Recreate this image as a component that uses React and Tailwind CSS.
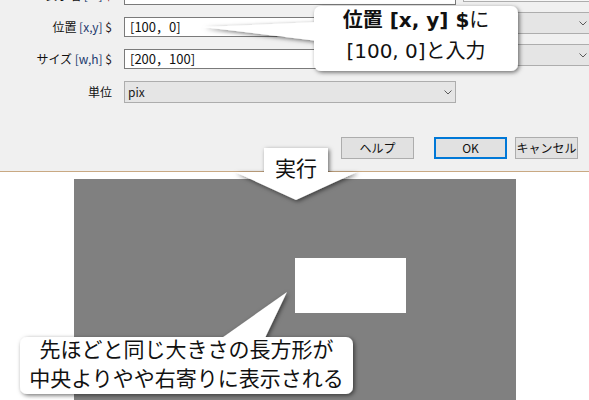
import React from "react";

function Chevron() {
  return (
    <div className="w-[15px] flex items-center justify-center shrink-0">
      <svg width="8" height="5" viewBox="0 0 8 5">
        <polyline points="0.5,0.5 4,4 7.5,0.5" fill="none" stroke="#5a5a5a" strokeWidth="1" />
      </svg>
    </div>
  );
}

function Combo({ text = "", w = "w-[128px]" }) {
  return (
    <div className={`${w} h-[22px] shrink-0 bg-[#e5e5e5] border border-[#adadad] flex items-center`}>
      <div className="flex-1 pl-[3px] text-[12px] leading-[20px] text-[#1a1a1a]">{text}</div>
      <Chevron />
    </div>
  );
}

function Input({ text }) {
  return (
    <div className="w-[332px] h-[20px] mt-[5px] shrink-0 bg-white border border-[#7a7a7a] pl-[5px] text-[13px] leading-[18px] text-[#111] whitespace-pre">
      {text}
    </div>
  );
}

function Label({ children, mt = "mt-[5px]", lh = "leading-[20px]" }) {
  return (
    <div className={`w-[112px] ${mt} ${lh} shrink-0 text-right text-[12px] text-[#111] whitespace-nowrap`}>
      {children}
    </div>
  );
}

function Btn({ children, w = "w-[73px]", primary = false }) {
  return (
    <div
      className={`${w} h-[22px] flex items-center justify-center text-[12px] text-[#111] bg-[#e1e1e1] ${
        primary ? "border-2 border-[#0078d7]" : "border border-[#adadad]"
      }`}
    >
      {children}
    </div>
  );
}

export default function App() {
  return (
    <div className="relative w-[589px] h-[400px] overflow-hidden bg-white font-['Noto_Sans_CJK_JP','Noto_Sans',sans-serif]">
      {/* dialog */}
      <div className="h-[172px] bg-[#f0f0f0] border-b border-[#c9a983] flex flex-col">
        <div className="flex flex-col -mt-[20px]">
          {/* row 0 (cut) */}
          <div className="flex items-start h-[25px]">
            <Label>
              表示名 <span className="text-[#1e3a6e]">[id]</span> <span className="text-[#8a1f1f]">$</span>
            </Label>
            <div className="w-[12px] shrink-0" />
            <Input text="" />
            <div className="w-[7px] shrink-0" />
            <div className="w-[128px] h-[22px] shrink-0 bg-[#f7f7f7] border border-[#adadad]" />
          </div>
          {/* row 1 */}
          <div className="flex items-start h-[25px] mt-[7px]">
            <Label>
              位置 <span className="text-[#1e3a6e]">[x,y]</span> <span className="text-[#2a1c1c]">$</span>
            </Label>
            <div className="w-[12px] shrink-0" />
            <Input text={"[100，0]"} />
            <div className="w-[7px] shrink-0" />
            <Combo />
          </div>
          {/* row 2 */}
          <div className="flex items-start h-[25px] mt-[7px]">
            <Label>
              サイズ <span className="text-[#1e3a6e]">[w,h]</span> <span className="text-[#2a1c1c]">$</span>
            </Label>
            <div className="w-[12px] shrink-0" />
            <Input text={"[200，100]"} />
            <div className="w-[7px] shrink-0" />
            <Combo />
          </div>
          {/* row 3 */}
          <div className="flex items-start h-[22px] mt-[12px]">
            <Label mt="mt-0" lh="leading-[22px]">単位</Label>
            <div className="w-[12px] shrink-0" />
            <Combo text="pix" w="w-[332px]" />
          </div>
        </div>
        {/* buttons */}
        <div className="flex justify-end items-center mt-[34px] pr-[11px]">
          <Btn>ヘルプ</Btn>
          <div className="w-[20px]" />
          <Btn primary>OK</Btn>
          <div className="w-[8px]" />
          <Btn w="w-[63px]">キャンセル</Btn>
        </div>
      </div>

      {/* canvas */}
      <div className="ml-[74px] mt-[7px] w-[442px] h-[240px] bg-[#808080] pt-[79px] pl-[221px]">
        <div className="w-[111px] h-[55px] bg-white" />
      </div>

      {/* callout shapes */}
      <svg className="absolute left-0 top-0 pointer-events-none" width="589" height="400" viewBox="0 0 589 400">
        <defs>
          <filter id="sh" x="-20%" y="-40%" width="140%" height="180%">
            <feDropShadow dx="1.5" dy="1.5" stdDeviation="2.2" floodColor="#000" floodOpacity="0.55" />
          </filter>
        </defs>
        <g filter="url(#sh)" fill="#ffffff">
          <rect x="314" y="6" width="204" height="65" rx="7" />
          <polygon points="318,22 203,27 318,41" />
        </g>
        <g filter="url(#sh)" fill="#ffffff">
          <polygon points="264,148 328,148 328,172 357,172 296,200 235,172 264,172" />
        </g>
        <g filter="url(#sh)" fill="#ffffff">
          <rect x="20" y="337" width="333" height="57" rx="7" />
          <polygon points="219,340 287,292 264,340" />
        </g>
      </svg>

      {/* callout texts */}
      <div className="absolute left-[314px] top-[5px] w-[204px] flex flex-col items-center font-['DejaVu_Sans','Noto_Sans_CJK_JP',sans-serif] text-[20px] leading-[31px] text-[#111] whitespace-nowrap">
        <div>
          <span className="font-bold">位置 [x, y] $</span>に
        </div>
        <div>[100, 0]と入力</div>
      </div>
      <div className="absolute left-[264px] top-[152px] w-[64px] text-center text-[21px] leading-[30px] text-[#111]">
        実行
      </div>
      <div className="absolute left-[20px] top-[334px] w-[333px] flex flex-col items-center text-[21px] leading-[29px] text-[#111] whitespace-nowrap">
        <div>先ほどと同じ大きさの長方形が</div>
        <div>中央よりやや右寄りに表示される</div>
      </div>
    </div>
  );
}
